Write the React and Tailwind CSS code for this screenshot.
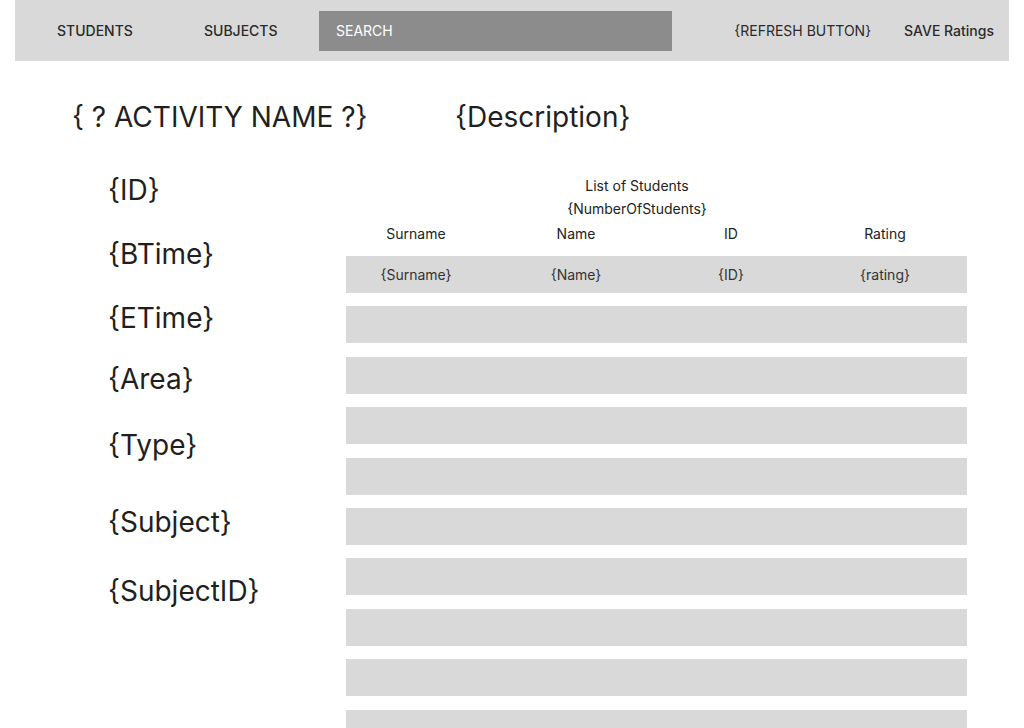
const fields = [
  { label: '{ID}', mt: 'mt-[1px]' },
  { label: '{BTime}', mt: 'mt-[32px]' },
  { label: '{ETime}', mt: 'mt-[32px]' },
  { label: '{Area}', mt: 'mt-[29px]' },
  { label: '{Type}', mt: 'mt-[34px]' },
  { label: '{Subject}', mt: 'mt-[45px]' },
  { label: '{SubjectID}', mt: 'mt-[37px]' },
];

const rows = [
  { surname: '{Surname}', name: '{Name}', id: '{ID}', rating: '{rating}' },
  {}, {}, {}, {}, {}, {}, {}, {}, {},
];

export default function App() {
  return (
    <div className="w-[1024px] h-[728px] overflow-hidden bg-white text-[#222] font-['Inter',_'Liberation_Sans',_sans-serif]">
      {/* top bar */}
      <div className="px-[15px]">
        <div className="h-[61px] bg-[#d9d9d9] flex items-center text-[14px] font-medium text-[#2a2a2a]">
          <div className="w-[189px] pl-[42px]">STUDENTS</div>
          <div className="w-[115px]">SUBJECTS</div>
          <div className="w-[353px] h-[40px] bg-[#8c8c8c] flex items-center pl-[17px] text-white font-normal">
            SEARCH
          </div>
          <div className="ml-auto flex items-center gap-[33px] pr-[15px]">
            <span className="font-normal">{'{REFRESH BUTTON}'}</span>
            <span>SAVE Ratings</span>
          </div>
        </div>
      </div>

      {/* title row */}
      <div className="mt-[39px] flex items-center text-[28px] leading-[34px] text-[#1f1f1f]">
        <div className="w-[455px] pl-[72px]">{'{ ? ACTIVITY NAME ?}'}</div>
        <div>{'{Description}'}</div>
      </div>

      {/* content */}
      <div className="mt-[39px] flex">
        <div className="w-[346px] pl-[108px] flex flex-col text-[28px] leading-[32px] text-[#1f1f1f]">
          {fields.map((f) => (
            <div key={f.label} className={f.mt}>{f.label}</div>
          ))}
        </div>

        <div className="w-[621px] flex flex-col">
          <div className="text-center text-[14px] leading-[23px] text-[#222] mt-[1px] pr-[39px]">
            <div>List of Students</div>
            <div>{'{NumberOfStudents}'}</div>
          </div>
          <div className="grid grid-cols-[140px_180px_130px_178px] text-center text-[14px] leading-[20px] mt-[4px]">
            <div>Surname</div>
            <div>Name</div>
            <div>ID</div>
            <div>Rating</div>
          </div>
          <div className="mt-[12px] flex flex-col gap-[13.4px]">
            {rows.map((r, i) => (
              <div
                key={i}
                className="h-[37px] shrink-0 bg-[#d9d9d9] grid grid-cols-[140px_180px_130px_178px] items-center text-center text-[14px] text-[#333]"
              >
                <div>{r.surname}</div>
                <div>{r.name}</div>
                <div>{r.id}</div>
                <div>{r.rating}</div>
              </div>
            ))}
          </div>
        </div>
      </div>
    </div>
  );
}
